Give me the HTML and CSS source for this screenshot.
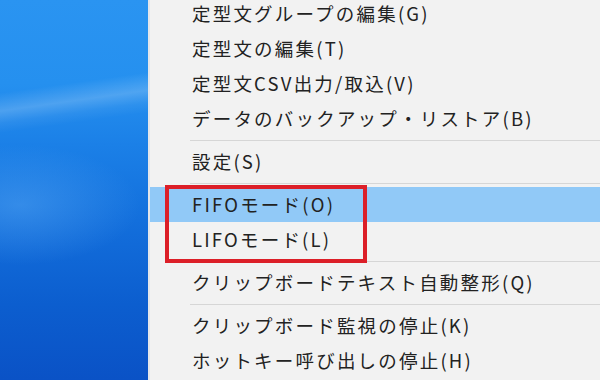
FILE: index.html
```html
<!DOCTYPE html>
<html lang="ja">
<head>
<meta charset="utf-8">
<link rel="stylesheet" href="styles.css">
</head>
<body>
<div class="screen">
  <div class="desktop"></div>
  <div class="menu">
    <ul class="items">
      <li class="item">定型文グループの編集(G)</li>
      <li class="item">定型文の編集(T)</li>
      <li class="item">定型文CSV出力/取込(V)</li>
      <li class="item">データのバックアップ・リストア(B)</li>
      <li class="sep"></li>
      <li class="item">設定(S)</li>
      <li class="sep"></li>
      <li class="item active">FIFOモード(O)</li>
      <li class="item">LIFOモード(L)</li>
      <li class="sep"></li>
      <li class="item">クリップボードテキスト自動整形(Q)</li>
      <li class="sep"></li>
      <li class="item">クリップボード監視の停止(K)</li>
      <li class="item">ホットキー呼び出しの停止(H)</li>
    </ul>
  </div>
  <div class="callout"></div>
</div>
</body>
</html>
```
FILE: styles.css
```css
html, body {
  margin: 0;
  padding: 0;
}
body {
  width: 600px;
  height: 380px;
  overflow: hidden;
  font-family: "Noto Sans CJK JP", "Noto Sans", sans-serif;
}
.screen {
  position: relative;
  display: flex;
  width: 600px;
  height: 380px;
  overflow: hidden;
}
.desktop {
  width: 148px;
  flex: none;
  background:
    linear-gradient(172deg, rgba(255,255,255,0) 92px, rgba(255,255,255,0.2) 110px, rgba(255,255,255,0.06) 122px, rgba(255,255,255,0) 132px),
    radial-gradient(ellipse 120px 60px at 20px 205px, rgba(90,170,245,0.45), rgba(90,170,245,0) 100%),
    linear-gradient(180deg, #2a94f1 0%, #2590ef 22%, #1b80e7 38%, #136fdc 58%, #0c5ecf 80%, #0a52c6 100%);
}
.menu {
  flex: 1;
  background: #f2f2f2;
  border-left: 2px solid #e4e6ea;
}
.items {
  list-style: none;
  margin: -4px 0 0 0;
  padding: 0;
}
.item {
  height: 35px;
  line-height: 35px;
  padding-left: 42px;
  font-size: 18.5px;
  letter-spacing: 2.2px;
  color: #222;
  white-space: nowrap;
}
.item.active {
  background: #91c9f7;
}
.sep {
  height: 8px;
  display: flex;
  align-items: center;
  padding-left: 40px;
}
.sep::before {
  content: "";
  flex: 1;
  height: 1px;
  background: #d6d6d6;
}
.callout {
  position: absolute;
  left: 165px;
  top: 185px;
  width: 202px;
  height: 78px;
  box-sizing: border-box;
  border: 4px solid #dc1f28;
}
```
